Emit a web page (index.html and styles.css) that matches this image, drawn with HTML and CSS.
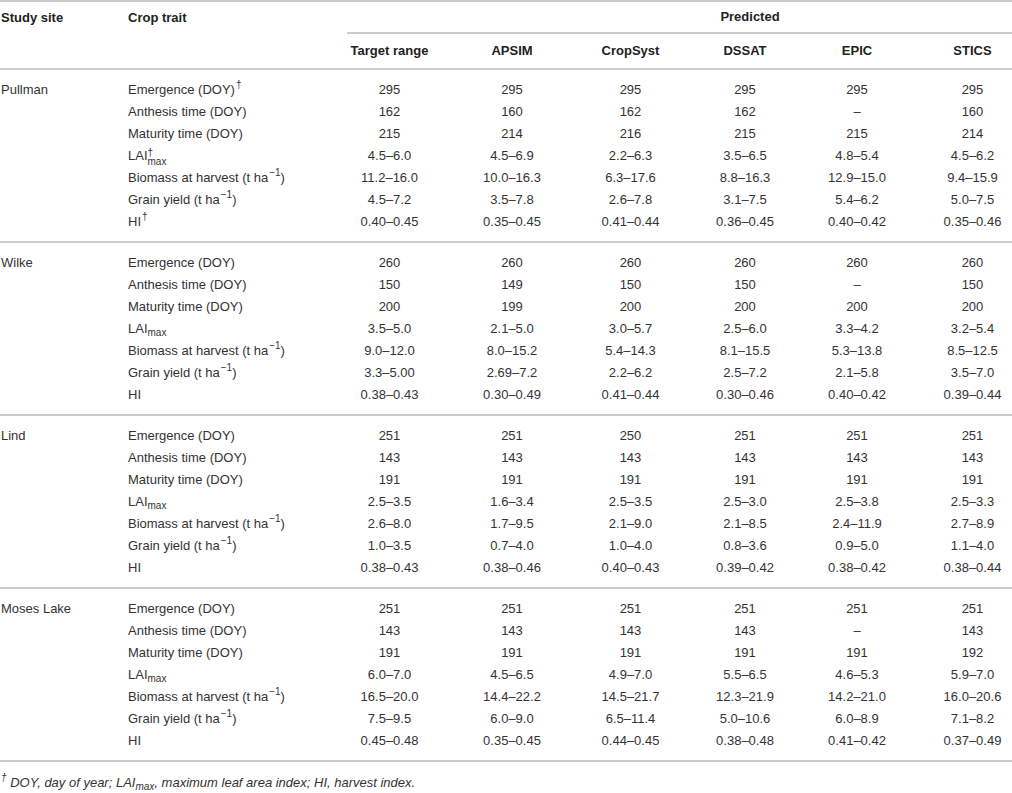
FILE: index.html
```html
<!DOCTYPE html>
<html lang="en">
<head>
    <meta charset="UTF-8">
    <title>Crop model calibration</title>
    <link rel="stylesheet" href="styles.css">
</head>
<body>
<table class="crop-table">
    <colgroup>
        <col class="c-site">
        <col class="c-trait">
        <col class="c-target">
        <col class="c-apsim">
        <col class="c-cropsyst">
        <col class="c-dssat">
        <col class="c-epic">
        <col class="c-stics">
    </colgroup>
    <thead>
        <tr class="head-top">
            <th rowspan="2" class="left">Study site</th>
            <th rowspan="2" class="left">Crop trait</th>
            <th colspan="6" class="predicted">Predicted</th>
        </tr>
        <tr class="head-sub">
            <th class="first">Target range</th>
            <th>APSIM</th>
            <th>CropSyst</th>
            <th>DSSAT</th>
            <th>EPIC</th>
            <th class="last">STICS</th>
        </tr>
    </thead>
    <tbody>
        <tr class="row-first">
            <td rowspan="7" class="site">Pullman</td>
            <td class="trait">Emergence (DOY)<sup>†</sup></td>
            <td class="first">295</td><td>295</td><td>295</td><td>295</td><td>295</td><td class="last">295</td>
        </tr>
        <tr>
            <td class="trait">Anthesis time (DOY)</td>
            <td class="first">162</td><td>160</td><td>162</td><td>162</td><td>–</td><td class="last">160</td>
        </tr>
        <tr>
            <td class="trait">Maturity time (DOY)</td>
            <td class="first">215</td><td>214</td><td>216</td><td>215</td><td>215</td><td class="last">214</td>
        </tr>
        <tr>
            <td class="trait">LAI<span class="stack"><span>†</span><span>max</span></span></td>
            <td class="first">4.5–6.0</td><td>4.5–6.9</td><td>2.2–6.3</td><td>3.5–6.5</td><td>4.8–5.4</td><td class="last">4.5–6.2</td>
        </tr>
        <tr>
            <td class="trait">Biomass at harvest (t ha<sup>−1</sup>)</td>
            <td class="first">11.2–16.0</td><td>10.0–16.3</td><td>6.3–17.6</td><td>8.8–16.3</td><td>12.9–15.0</td><td class="last">9.4–15.9</td>
        </tr>
        <tr>
            <td class="trait">Grain yield (t ha<sup>−1</sup>)</td>
            <td class="first">4.5–7.2</td><td>3.5–7.8</td><td>2.6–7.8</td><td>3.1–7.5</td><td>5.4–6.2</td><td class="last">5.0–7.5</td>
        </tr>
        <tr class="row-last">
            <td class="trait">HI<sup>†</sup></td>
            <td class="first">0.40–0.45</td><td>0.35–0.45</td><td>0.41–0.44</td><td>0.36–0.45</td><td>0.40–0.42</td><td class="last">0.35–0.46</td>
        </tr>
    </tbody>
    <tbody>
        <tr class="row-first">
            <td rowspan="7" class="site">Wilke</td>
            <td class="trait">Emergence (DOY)</td>
            <td class="first">260</td><td>260</td><td>260</td><td>260</td><td>260</td><td class="last">260</td>
        </tr>
        <tr>
            <td class="trait">Anthesis time (DOY)</td>
            <td class="first">150</td><td>149</td><td>150</td><td>150</td><td>–</td><td class="last">150</td>
        </tr>
        <tr>
            <td class="trait">Maturity time (DOY)</td>
            <td class="first">200</td><td>199</td><td>200</td><td>200</td><td>200</td><td class="last">200</td>
        </tr>
        <tr>
            <td class="trait">LAI<sub>max</sub></td>
            <td class="first">3.5–5.0</td><td>2.1–5.0</td><td>3.0–5.7</td><td>2.5–6.0</td><td>3.3–4.2</td><td class="last">3.2–5.4</td>
        </tr>
        <tr>
            <td class="trait">Biomass at harvest (t ha<sup>−1</sup>)</td>
            <td class="first">9.0–12.0</td><td>8.0–15.2</td><td>5.4–14.3</td><td>8.1–15.5</td><td>5.3–13.8</td><td class="last">8.5–12.5</td>
        </tr>
        <tr>
            <td class="trait">Grain yield (t ha<sup>−1</sup>)</td>
            <td class="first">3.3–5.00</td><td>2.69–7.2</td><td>2.2–6.2</td><td>2.5–7.2</td><td>2.1–5.8</td><td class="last">3.5–7.0</td>
        </tr>
        <tr class="row-last">
            <td class="trait">HI</td>
            <td class="first">0.38–0.43</td><td>0.30–0.49</td><td>0.41–0.44</td><td>0.30–0.46</td><td>0.40–0.42</td><td class="last">0.39–0.44</td>
        </tr>
    </tbody>
    <tbody>
        <tr class="row-first">
            <td rowspan="7" class="site">Lind</td>
            <td class="trait">Emergence (DOY)</td>
            <td class="first">251</td><td>251</td><td>250</td><td>251</td><td>251</td><td class="last">251</td>
        </tr>
        <tr>
            <td class="trait">Anthesis time (DOY)</td>
            <td class="first">143</td><td>143</td><td>143</td><td>143</td><td>143</td><td class="last">143</td>
        </tr>
        <tr>
            <td class="trait">Maturity time (DOY)</td>
            <td class="first">191</td><td>191</td><td>191</td><td>191</td><td>191</td><td class="last">191</td>
        </tr>
        <tr>
            <td class="trait">LAI<sub>max</sub></td>
            <td class="first">2.5–3.5</td><td>1.6–3.4</td><td>2.5–3.5</td><td>2.5–3.0</td><td>2.5–3.8</td><td class="last">2.5–3.3</td>
        </tr>
        <tr>
            <td class="trait">Biomass at harvest (t ha<sup>−1</sup>)</td>
            <td class="first">2.6–8.0</td><td>1.7–9.5</td><td>2.1–9.0</td><td>2.1–8.5</td><td>2.4–11.9</td><td class="last">2.7–8.9</td>
        </tr>
        <tr>
            <td class="trait">Grain yield (t ha<sup>−1</sup>)</td>
            <td class="first">1.0–3.5</td><td>0.7–4.0</td><td>1.0–4.0</td><td>0.8–3.6</td><td>0.9–5.0</td><td class="last">1.1–4.0</td>
        </tr>
        <tr class="row-last">
            <td class="trait">HI</td>
            <td class="first">0.38–0.43</td><td>0.38–0.46</td><td>0.40–0.43</td><td>0.39–0.42</td><td>0.38–0.42</td><td class="last">0.38–0.44</td>
        </tr>
    </tbody>
    <tbody>
        <tr class="row-first">
            <td rowspan="7" class="site">Moses Lake</td>
            <td class="trait">Emergence (DOY)</td>
            <td class="first">251</td><td>251</td><td>251</td><td>251</td><td>251</td><td class="last">251</td>
        </tr>
        <tr>
            <td class="trait">Anthesis time (DOY)</td>
            <td class="first">143</td><td>143</td><td>143</td><td>143</td><td>–</td><td class="last">143</td>
        </tr>
        <tr>
            <td class="trait">Maturity time (DOY)</td>
            <td class="first">191</td><td>191</td><td>191</td><td>191</td><td>191</td><td class="last">192</td>
        </tr>
        <tr>
            <td class="trait">LAI<sub>max</sub></td>
            <td class="first">6.0–7.0</td><td>4.5–6.5</td><td>4.9–7.0</td><td>5.5–6.5</td><td>4.6–5.3</td><td class="last">5.9–7.0</td>
        </tr>
        <tr>
            <td class="trait">Biomass at harvest (t ha<sup>−1</sup>)</td>
            <td class="first">16.5–20.0</td><td>14.4–22.2</td><td>14.5–21.7</td><td>12.3–21.9</td><td>14.2–21.0</td><td class="last">16.0–20.6</td>
        </tr>
        <tr>
            <td class="trait">Grain yield (t ha<sup>−1</sup>)</td>
            <td class="first">7.5–9.5</td><td>6.0–9.0</td><td>6.5–11.4</td><td>5.0–10.6</td><td>6.0–8.9</td><td class="last">7.1–8.2</td>
        </tr>
        <tr class="row-last">
            <td class="trait">HI</td>
            <td class="first">0.45–0.48</td><td>0.35–0.45</td><td>0.44–0.45</td><td>0.38–0.48</td><td>0.41–0.42</td><td class="last">0.37–0.49</td>
        </tr>
    </tbody>
</table>
<p class="footnote"><sup>†</sup> DOY, day of year; LAI<sub>max</sub>, maximum leaf area index; HI, harvest index.</p>
</body>
</html>
```

FILE: styles.css
```css
body {
    margin: 0;
    font-family: "Liberation Sans", Arial, sans-serif;
    font-size: 13px;
    color: #333333;
    background: #ffffff;
}

.crop-table {
    width: 1012px;
    table-layout: fixed;
    border-collapse: separate;
    border-spacing: 0;
}

.c-site { width: 128px; }
.c-trait { width: 219px; }
.c-target { width: 105px; }
.c-apsim { width: 120px; }
.c-cropsyst { width: 117px; }
.c-dssat { width: 112px; }
.c-epic { width: 112px; }
.c-stics { width: 99px; }

th, td {
    padding: 0;
    line-height: 22px;
    height: 22px;
    text-align: center;
    white-space: nowrap;
    vertical-align: middle;
}

th {
    font-weight: bold;
    color: #222222;
}

.first { padding-right: 20px; }
.last { padding-left: 20px; }

/* header */
.head-top th {
    border-top: 2px solid #cccccc;
    height: 30px;
}
.head-top th.left {
    text-align: left;
    vertical-align: top;
    padding-top: 5px;
    border-bottom: 2px solid #cccccc;
}
.head-top th.left:first-child { padding-left: 1px; }
.head-top .predicted {
    border-bottom: 2px solid #cccccc;
    padding-left: 141px;
}
.head-sub th {
    height: 34px;
    border-bottom: 2px solid #cccccc;
}

/* body groups */
.site, .trait { text-align: left; }
.site {
    vertical-align: top;
    padding-top: 9px;
    padding-left: 1px;
    border-bottom: 2px solid #cccccc;
}
.row-first td { padding-top: 9px; }
.row-last td {
    padding-bottom: 8px;
    border-bottom: 2px solid #cccccc;
}

sup, sub {
    font-size: 10px;
    line-height: 0;
    position: relative;
    vertical-align: baseline;
}
sup { top: -6px; margin-left: 1px; }
sub { top: 3px; }

.stack {
    display: inline-block;
    font-size: 10px;
    line-height: 9px;
    vertical-align: -5px;
}
.stack span { display: block; }

.footnote {
    margin: 0;
    padding-top: 12px;
    font-style: italic;
    line-height: 18px;
}
```
